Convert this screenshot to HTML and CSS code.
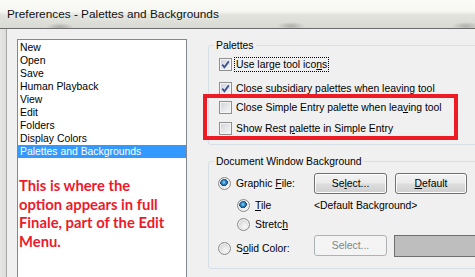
FILE: index.html
```html
<!DOCTYPE html>
<html>
<head>
	<meta charset="utf-8">
	<title>Preferences - Palettes and Backgrounds</title>
	<link rel="stylesheet" href="styles.css">
</head>
<body>
	<div class="window">
		<div class="titlebar">
			<span class="title">Preferences - Palettes and Backgrounds</span>
		</div>

		<div class="client">
			<div class="frame"></div>

			<div class="content">
				<div class="listbox">
					<div class="item">New</div>
					<div class="item">Open</div>
					<div class="item">Save</div>
					<div class="item">Human Playback</div>
					<div class="item">View</div>
					<div class="item">Edit</div>
					<div class="item">Folders</div>
					<div class="item">Display Colors</div>
					<div class="item selected">Palettes and Backgrounds</div>
					<p class="note">This is where the option appears in full Finale, part of the Edit Menu.</p>
				</div>

				<div class="pages">
					<fieldset class="group palettes">
						<legend>Palettes</legend>
						<div class="check-row r1">
							<span class="box checked"><svg viewBox="0 0 11 11"><path d="M2.2 5.6 L4.4 8.2 L8.8 2.4"/></svg></span>
							<span class="label focus">Use large tool ico<u>n</u>s</span>
						</div>
						<div class="check-row r2">
							<span class="box checked"><svg viewBox="0 0 11 11"><path d="M2.2 5.6 L4.4 8.2 L8.8 2.4"/></svg></span>
							<span class="label">Close subsidiary palettes when leaving tool</span>
						</div>
						<div class="check-row r3">
							<span class="box"></span>
							<span class="label">Close Simple Entry palette when lea<u>v</u>ing tool</span>
						</div>
						<div class="check-row r4">
							<span class="box"></span>
							<span class="label">Show Rest <u>p</u>alette in Simple Entry</span>
						</div>
					</fieldset>

					<fieldset class="group docbg">
						<legend>Document Window Background</legend>
						<div class="bg-grid">
							<div class="radio-row">
								<span class="radio on"></span>
								<span class="label">Graphic <u>F</u>ile:</span>
							</div>
							<button class="btn">Se<u>l</u>ect...</button>
							<button class="btn"><u>D</u>efault</button>

							<div class="radio-row sub">
								<span class="radio on"></span>
								<span class="label"><u>T</u>ile</span>
							</div>
							<div class="path">&lt;Default Background&gt;</div>

							<div class="radio-row sub">
								<span class="radio"></span>
								<span class="label">Stretc<u>h</u></span>
							</div>

							<div class="radio-row solid">
								<span class="radio"></span>
								<span class="label">S<u>o</u>lid Color:</span>
							</div>
							<button class="btn" disabled>Select...</button>
							<div class="swatch"></div>
						</div>
					</fieldset>

					<div class="callout"></div>
				</div>
			</div>
		</div>
	</div>
</body>
</html>
```

FILE: styles.css
```css
body, html {
	height: 100%;
}

body {
	margin: 0;
	padding: 0;
	width: 475px;
	height: 277px;
	overflow: hidden;
	background: #f0f0f0;
	font-family: "Liberation Sans", Arial, sans-serif;
	font-size: 10.4px;
	color: #000;
}

.window {
	display: flex;
	flex-direction: column;
	height: 100%;
	overflow: hidden;
}

/* title bar */
.titlebar {
	height: 28px;
	flex: none;
	display: flex;
	align-items: center;
	padding-left: 7px;
	border-bottom: 1px solid #6b6b6b;
	background:
		radial-gradient(ellipse 14px 4px at 60px 27px, rgba(90, 90, 90, 0.35), transparent),
		radial-gradient(ellipse 14px 4px at 291px 26px, rgba(90, 90, 90, 0.35), transparent),
		radial-gradient(ellipse 14px 4px at 466px 26px, rgba(90, 90, 90, 0.35), transparent),
		linear-gradient(#fbfbf8 0, #f6f6f2 40%, #e2e2dc 55%, #dadad4 100%);
}

.title {
	font-family: "Liberation Sans", Arial, sans-serif;
	font-size: 11.8px;
	margin-top: -1px;
	color: #101010;
	text-shadow: 0 0 6px #fff;
}

/* client area */
.client {
	flex: 1;
	display: flex;
	min-height: 0;
	overflow: hidden;
}

.frame {
	width: 6px;
	flex: none;
	background: linear-gradient(90deg, #e6e6e4, #dcdcda);
	border-right: 1px solid #a9a9a9;
}

.content {
	flex: 1;
	display: flex;
	gap: 21px;
	padding: 10px 0 0 10px;
	min-width: 0;
	overflow: hidden;
}

/* list */
.listbox {
	width: 168px;
	height: 240px;
	flex: none;
	border: 1px solid #828790;
	border-bottom: none;
	background: #fff;
	padding-top: 1px;
}

.item {
	height: 13px;
	line-height: 13px;
	padding-left: 2px;
	white-space: nowrap;
}

.item.selected {
	background: #3399ff;
	color: #fff;
}

.note {
	width: 155px;
	margin: 18px 0 0 1px;
	font-family: Lato, "Liberation Sans", sans-serif;
	font-weight: bold;
	font-size: 14.8px;
	line-height: 18.5px;
	color: #ec1a2c;
}

/* right side */
.pages {
	position: relative;
	flex: none;
	width: 300px;
}

.group {
	margin: 0;
	border: 1px solid #d5dfe5;
	border-radius: 3px;
	padding: 0 0 8px 9px;
	min-width: 0;
}

.group legend {
	padding: 0 2px;
	margin-left: -4px;
	line-height: 13px;
}

.palettes {
	padding-left: 10px;
}

.palettes legend {
	margin-left: -5px;
}

.check-row {
	display: flex;
	align-items: center;
	gap: 2px;
	height: 16px;
	white-space: nowrap;
}

.r1 { margin-top: 4px; }
.r2 { margin-top: 8px; }
.r3 { margin-top: 3px; }
.r4 { margin-top: 5px; }

.box {
	width: 11px;
	height: 11px;
	flex: none;
	border: 1px solid #8e8f8f;
	background: linear-gradient(135deg, #cdd1d6 0, #e7e8ea 55%, #f7f7f7 100%);
	box-shadow: inset 0 0 0 1px #f4f4f4;
}

.box svg {
	display: block;
	width: 11px;
	height: 11px;
}

.box path {
	fill: none;
	stroke: #3e5298;
	stroke-width: 1.8;
}

.label {
	padding: 0 1px;
	border: 1px solid transparent;
	line-height: 13px;
}

.label.focus {
	border: 1px dotted #000;
}

/* document window background */
.docbg {
	margin-top: 10px;
	padding-bottom: 9px;
}

.bg-grid {
	display: grid;
	grid-template-columns: 88px 73px 72px;
	column-gap: 8px;
	align-items: center;
	margin-top: 5px;
}

.radio-row {
	display: flex;
	align-items: center;
	gap: 3px;
	height: 21px;
	white-space: nowrap;
	grid-column: 1;
}

.radio-row.sub {
	height: 16px;
	padding-left: 19px;
	margin-top: 3px;
}

.radio-row.sub + .radio-row.sub {
	margin-top: 4px;
}

.radio-row.solid {
	height: 22px;
	margin-top: 5px;
}

.radio {
	width: 11px;
	height: 11px;
	flex: none;
	border: 1px solid #8b8b8b;
	border-radius: 50%;
	background: radial-gradient(circle at 60% 65%, #fafafa 0, #e2e2e2 45%, #c8c8c8 100%);
	box-shadow: inset 0 0 0 1px #f2f2f2;
}

.radio.on {
	background:
		radial-gradient(circle at 45% 40%, #9fdcff 0, #3c9ad6 1.5px, #1a5f98 3px, #0d3f6e 3.6px, transparent 4px),
		radial-gradient(circle at 60% 65%, #fafafa 0, #e2e2e2 45%, #c8c8c8 100%);
}

.btn {
	height: 21px;
	padding: 0;
	border: 1px solid #707070;
	border-radius: 3px;
	background: linear-gradient(#f2f2f2 0, #ebebeb 48%, #dddddd 52%, #cfcfcf 100%);
	box-shadow: inset 0 0 0 1px #fcfcfc;
	font-family: "Liberation Sans", Arial, sans-serif;
	font-size: 10.4px;
	color: #000;
}

.btn:disabled {
	border-color: #adb2b5;
	background: #f4f4f4;
	box-shadow: none;
	color: #838383;
}

.path {
	grid-column: 2 / 4;
	margin-top: 3px;
	white-space: nowrap;
}

.swatch {
	width: 100px;
	height: 20px;
	margin-left: -1px;
	border: 1px solid #6f6f6f;
	background: #bebebe;
}

/* annotation over the dialog */
.callout {
	position: absolute;
	left: -5px;
	top: 55px;
	width: 247px;
	height: 38px;
	border: 4px solid #ed1c24;
}
```
